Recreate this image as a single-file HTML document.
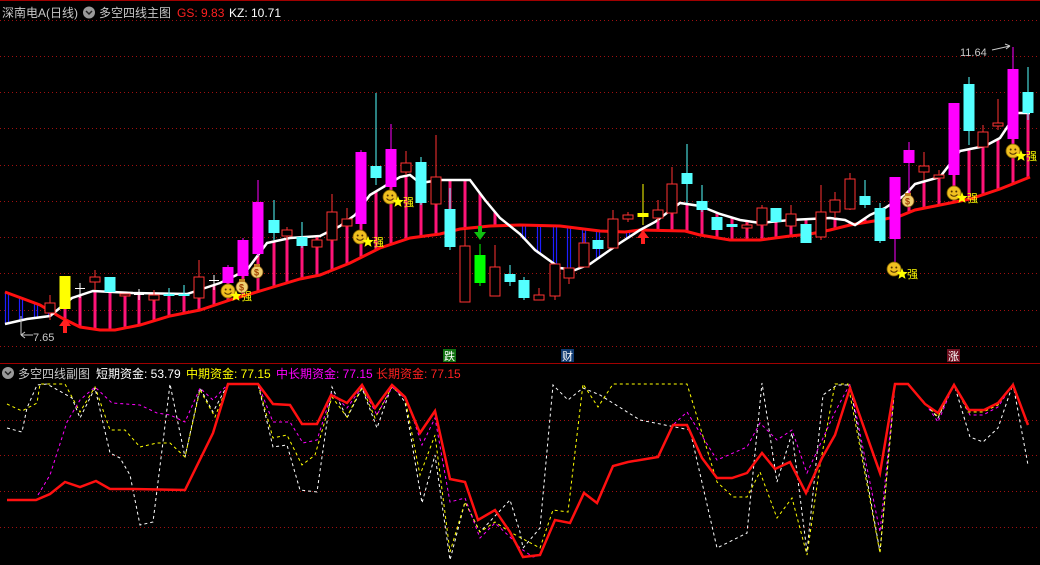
<!DOCTYPE html>
<html><head><meta charset="utf-8"><style>
html,body{margin:0;padding:0;background:#000;width:1040px;height:565px;overflow:hidden}
svg{display:block}
text{font-family:"Liberation Sans","Noto Sans CJK SC",sans-serif}
</style></head><body>
<svg id="s" width="1040" height="565" viewBox="0 0 1040 565" xmlns="http://www.w3.org/2000/svg">
<rect width="1040" height="565" fill="#000"/>
<line x1="0" y1="0.5" x2="1040" y2="0.5" stroke="#a00000"/>
<line x1="0" y1="363.5" x2="1040" y2="363.5" stroke="#a00000"/>
<g id="grid" stroke="#a01010" stroke-width="1" stroke-dasharray="1,3"></g>
<g id="bars"></g>
<polyline id="redl" fill="none" stroke="#ff1010" stroke-width="3"/>
<polyline id="whl" fill="none" stroke="#fff" stroke-width="2.5"/>
<g id="cand"></g>
<g id="low" fill="none"></g>
<!-- header -->
<text x="2" y="17" font-size="12" fill="#c8c8c8">深南电A(日线)</text>
<circle cx="89" cy="12.5" r="6" fill="#9a9a9a"/><path d="M86 11 L89 14 L92 11" stroke="#222" stroke-width="1.5" fill="none"/>
<text x="99" y="17" font-size="12" fill="#c8c8c8">多空四线主图</text>
<text x="177" y="17" font-size="12" fill="#ff2020">GS: 9.83</text>
<text x="229" y="17" font-size="12" fill="#fff">KZ: 10.71</text>
<circle cx="8" cy="373" r="6" fill="#9a9a9a"/><path d="M5 371.5 L8 374.5 L11 371.5" stroke="#222" stroke-width="1.5" fill="none"/>
<text x="18" y="378" font-size="12" fill="#c8c8c8">多空四线副图</text>
<text x="96" y="378" font-size="12" fill="#fff">短期资金: 53.79</text>
<text x="186" y="378" font-size="12" fill="#ffff00">中期资金: 77.15</text>
<text x="276" y="378" font-size="12" fill="#ff00ff">中长期资金: 77.15</text>
<text x="376" y="378" font-size="12" fill="#ff2020">长期资金: 77.15</text>
<!-- price labels -->
<text x="33" y="341" font-size="11" fill="#c8c8c8">7.65</text>
<path d="M21 316 L21 335 M21 335 L33 335 M21 335 L25 332 M21 335 L25 338" stroke="#c8c8c8" fill="none"/>
<text x="960" y="56" font-size="11" fill="#c8c8c8">11.64</text>
<path d="M992 50 L1010 46 M1010 46 L1005 44 M1010 46 L1006 49" stroke="#c8c8c8" fill="none"/>
<!-- marker boxes -->
<rect x="443" y="349" width="13" height="13" fill="#107010"/><text x="444" y="360" font-size="11" fill="#fff">跌</text>
<rect x="561" y="349" width="13" height="13" fill="#103a70"/><text x="562" y="360" font-size="11" fill="#fff">财</text>
<rect x="947" y="349" width="13" height="13" fill="#701020"/><text x="948" y="360" font-size="11" fill="#fff">涨</text>
<!-- arrows -->
<path d="M65 318 L59 326 L63 326 L63 333 L67 333 L67 326 L71 326Z" fill="#ff2020"/>
<path d="M643 230 L637 238 L641 238 L641 244 L645 244 L645 238 L649 238Z" fill="#ff2020"/>
<path d="M480 240 L474 232 L478 232 L478 226 L482 226 L482 232 L486 232Z" fill="#10c010"/>
<g id="icons"></g>
</svg>
<script>
var NS="http://www.w3.org/2000/svg";
function el(p,t,a,txt){var e=document.createElementNS(NS,t);for(var k in a)e.setAttribute(k,a[k]);if(txt)e.textContent=txt;document.getElementById(p).appendChild(e);return e;}
[20,56,92,128,165,201,237,273,310,346,420,455,491,527].forEach(function(y){el('grid','line',{x1:0,x2:1040,y1:y+.5,y2:y+.5});});
var red=[[5,292],[40,305],[62,318],[80,327],[100,330],[115,330],[140,325],[170,316],[200,310],[230,300],[270,288],[300,279],[320,275],[350,263],[380,248],[410,238],[440,234],[460,229],[490,226],[520,225],[560,226],[600,231],[625,232],[640,230],[685,231],[700,235],[730,240],[760,240],[790,236],[810,234],[830,230],[850,225],[880,220],[900,216],[915,210],[945,204],[970,199],[1000,189],[1030,177]];
var wh=[[5,324],[27,319],[50,316],[72,298],[93,291],[133,293],[187,294],[220,283],[247,270],[267,243],[290,238],[320,236],[340,226],[355,215],[370,195],[385,186],[400,177],[410,175],[420,183],[440,180],[470,180],[485,200],[500,218],[520,234],[535,250],[560,268],[575,270],[590,264],[610,250],[620,243],[640,230],[655,222],[680,203],[700,206],[720,214],[740,220],[760,223],[790,220],[830,218],[845,220],[855,225],[870,215],[885,208],[905,195],[915,184],[940,177],[960,151],[985,146],[1000,138],[1008,126],[1018,113],[1030,113]];
function pts(a){return a.map(function(p){return p.join(',')}).join(' ');}
document.getElementById('redl').setAttribute('points',pts(red));
document.getElementById('whl').setAttribute('points',pts(wh));
function itp(a,x){for(var i=0;i<a.length-1;i++){if(x>=a[i][0]&&x<=a[i+1][0]){var t=(x-a[i][0])/(a[i+1][0]-a[i][0]);return a[i][1]+t*(a[i+1][1]-a[i][1]);}}return a[a.length-1][1];}
var C=[[7,313,318,'c',313,318],[21,315,320,'c',315,320],[36,316,322,'c',316,322],[50,303,313,'r',295,320],[65,276,309,'y',276,309],[80,288,290,'w',283,298],[95,277,282,'r',270,290],[110,277,292,'c',277,292],[125,294,296,'r',294,296],[139,294,296,'w',289,300],[154,295,300,'r',290,302],[169,294,296,'c',288,296],[184,294,296,'c',285,296],[199,277,298,'r',260,300],[214,280,285,'w',275,290],[228,267,283,'m',265,290],[243,240,276,'m',238,278],[258,202,254,'m',180,256],[274,220,233,'c',200,240],[287,230,236,'r',227,240],[302,237,246,'c',222,248],[317,240,247,'r',237,250],[332,212,240,'r',194,242],[347,219,226,'r',208,228],[361,152,224,'m',150,230],[376,166,178,'c',93,185],[391,149,187,'m',124,200],[406,163,172,'r',151,175],[421,162,203,'c',157,205],[436,177,204,'r',135,206],[450,209,247,'c',188,250],[465,246,302,'r',229,302],[480,255,283,'g',244,286],[495,267,296,'r',245,296],[510,274,282,'c',265,286],[524,280,298,'c',277,300],[539,295,300,'r',288,300],[555,264,296,'r',264,300],[569,268,278,'r',268,284],[584,243,267,'r',233,267],[598,240,249,'c',240,249],[613,219,248,'r',210,248],[628,215,219,'r',212,222],[643,213,217,'y',184,225],[658,210,218,'r',200,222],[672,184,213,'r',167,215],[687,173,184,'c',144,203],[702,201,210,'c',185,212],[717,217,230,'c',217,230],[732,224,227,'c',224,227],[747,225,228,'r',222,232],[762,208,225,'r',205,228],[776,208,222,'c',208,222],[791,214,226,'r',205,228],[806,224,243,'c',224,243],[821,212,237,'r',185,240],[835,200,212,'r',192,218],[850,179,209,'r',173,210],[865,196,205,'c',180,208],[880,208,241,'c',203,243],[895,177,239,'m',177,262],[909,150,163,'m',142,200],[924,166,172,'r',152,180],[939,175,178,'r',170,182],[954,103,175,'m',103,185],[969,84,131,'c',77,145],[983,132,147,'r',125,147],[998,123,126,'r',99,130],[1013,69,139,'m',47,145],[1028,92,113,'c',67,120]];
var col={r:'#ff3232',c:'#54ffff',m:'#ff00ff',y:'#ffff00',g:'#00ff00',w:'#ffffff'};
C.forEach(function(c){var x=c[0];var ry=itp(red,x),wy=itp(wh,x);
 if(wy<ry-1)el('bars','rect',{x:x-1.5,y:wy,width:3,height:ry-wy,fill:'#ff1478'});
 else if(wy>ry+1)el('bars','rect',{x:x-1.5,y:ry,width:3,height:wy-ry,fill:'none',stroke:'#1e1eff','stroke-width':1.2});});
C.forEach(function(c){var x=c[0],t=c[3],k=col[t];
 if(x<40)return;
 el('cand','line',{x1:x,x2:x,y1:c[4],y2:c[5],stroke:k});
 var h=Math.max(c[2]-c[1],1);
 if(t=='r')el('cand','rect',{x:x-5,y:c[1],width:10,height:h,fill:'#000',stroke:k});
 else if(t=='w')el('cand','rect',{x:x-5,y:c[1],width:10,height:1,fill:k});
 else el('cand','rect',{x:x-5.5,y:c[1],width:11,height:h,fill:k});});
function smile(x,y){el('icons','circle',{cx:x,cy:y,r:7,fill:'#f0c020',stroke:'#806000','stroke-width':.8});
 el('icons','circle',{cx:x-2.3,cy:y-1.5,r:1,fill:'#503000'});el('icons','circle',{cx:x+2.3,cy:y-1.5,r:1,fill:'#503000'});
 el('icons','path',{d:'M'+(x-3.5)+' '+(y+1.5)+' Q'+x+' '+(y+5)+' '+(x+3.5)+' '+(y+1.5),stroke:'#503000',fill:'none','stroke-width':1});
 var sx=x+8,sy=y+5,p=[];for(var i=0;i<10;i++){var a=-Math.PI/2+i*Math.PI/5,rr=i%2?2.6:6;p.push((sx+rr*Math.cos(a)).toFixed(1)+','+(sy+rr*Math.sin(a)).toFixed(1));}
 el('icons','polygon',{points:p.join(' '),fill:'#ffff00'});
 el('icons','text',{x:x+13,y:y+9,'font-size':11,fill:'#ffff00'},'强');}
function bag(x,y){el('icons','ellipse',{cx:x,cy:y+1,rx:6,ry:6,fill:'#f0d070',stroke:'#805010','stroke-width':.8});
 el('icons','rect',{x:x-3,y:y-7,width:6,height:3,fill:'#c08020'});
 el('icons','text',{x:x-3,y:y+4.5,'font-size':9,fill:'#a04000','font-weight':'bold'},'$');}
smile(228,291);smile(360,237);smile(390,197);smile(894,269);smile(954,193);smile(1013,151);
bag(242,286);bag(257,271);bag(908,200);
function line(a,c,w,d){el('low','polyline',{points:pts(a),stroke:c,'stroke-width':w,'stroke-dasharray':d||''});}
var W=[[7,428],[22,432],[27,408],[37,385],[47,384],[72,398],[80,418],[95,388],[110,453],[120,458],[130,475],[140,525],[153,522],[163,442],[170,384],[185,457],[200,388],[213,412],[228,384],[258,384],[273,447],[287,445],[300,490],[317,492],[332,387],[347,418],[362,388],[377,428],[392,385],[405,402],[422,503],[435,455],[450,560],[465,502],[480,532],[510,500],[520,532],[523,548],[540,528],[553,385],[568,400],[583,388],[600,395],[640,420],[690,430],[717,548],[747,533],[762,383],[777,482],[792,433],[807,552],[823,395],[837,385],[850,385],[880,552],[895,384],[908,384],[938,418],[954,384],[970,437],[983,442],[998,428],[1013,384],[1028,465]];
var Y=[[7,404],[22,411],[37,403],[40,384],[65,384],[80,412],[95,387],[110,430],[125,430],[140,447],[157,443],[170,443],[185,457],[200,390],[215,417],[228,384],[258,384],[273,438],[287,435],[302,465],[315,455],[332,397],[347,417],[362,387],[375,418],[392,387],[405,398],[420,475],[435,435],[450,552],[465,502],[480,532],[495,522],[510,532],[540,548],[553,510],[568,512],[583,384],[598,407],[613,384],[687,384],[717,482],[733,497],[747,497],[760,472],[777,518],[792,498],[807,555],[820,465],[835,384],[848,384],[880,553],[895,384],[908,384],[925,403],[938,417],[954,384],[968,412],[983,412],[998,405],[1013,384]];
var M=[[38,495],[50,475],[67,422],[80,400],[95,387],[112,403],[140,405],[157,413],[170,415],[185,422],[200,388],[213,400],[228,384],[258,384],[273,422],[290,422],[303,443],[317,440],[332,393],[347,408],[362,387],[377,415],[392,387],[407,400],[422,445],[435,418],[450,502],[465,498],[480,538],[495,523],[510,537],[520,548],[533,557],[540,555],[555,520],[570,523],[584,493],[597,503],[613,466],[628,462],[658,457],[673,425],[687,412],[717,460],[747,447],[760,423],[777,440],[792,430],[807,473],[835,412],[850,384],[880,532],[895,384],[908,384],[925,403],[938,422],[954,384],[970,415],[983,415],[998,407],[1013,384]];
var R=[[7,500],[36,500],[50,494],[65,482],[80,487],[96,481],[110,489],[133,489],[185,490],[213,433],[228,384],[258,384],[273,404],[290,405],[302,424],[317,424],[331,395],[347,403],[362,385],[375,408],[392,385],[405,397],[420,433],[435,411],[450,479],[465,482],[478,520],[495,510],[510,532],[523,557],[540,555],[555,520],[570,523],[584,493],[597,503],[613,466],[628,462],[658,457],[673,425],[687,425],[702,458],[717,478],[732,478],[747,473],[762,453],[775,469],[790,462],[806,493],[822,458],[835,435],[850,388],[880,473],[895,384],[908,384],[925,404],[938,413],[954,385],[969,410],[984,410],[998,403],[1013,385],[1028,425]];
line(W,'#ffffff',1,'3,3');line(Y,'#ffff00',1,'3,3');line(M,'#ff00ff',1,'3,3');line(R,'#ff1010',2.5);
</script>
</body></html>
